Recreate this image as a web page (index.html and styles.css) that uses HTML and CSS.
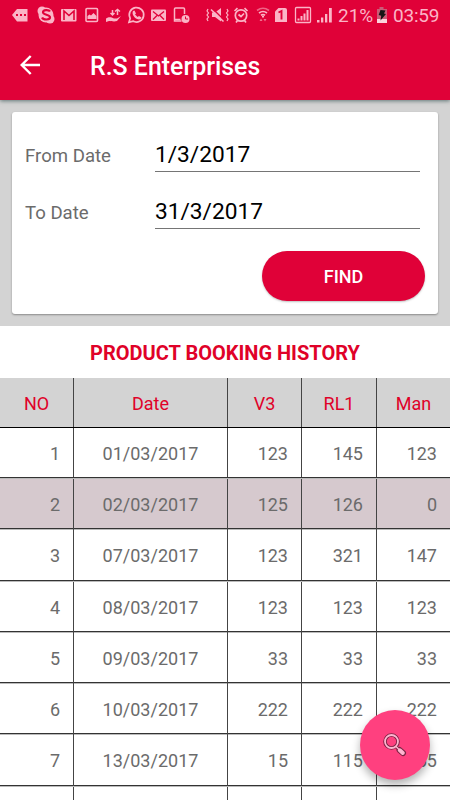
FILE: index.html
```html
<!doctype html>
<html lang="en">
    <head>
        <meta charset="UTF-8" />
        <title>R.S Enterprises</title>
        <link rel="stylesheet" href="styles.css" />
    </head>

    <body>
        <header class="header">
            <div class="status-bar">
                <svg class="status-left" width="195" height="30" viewBox="0 0 195 30">
                    <!-- more notifications -->
                    <path fill="#fbb4c6" d="M12 15l5-6h10.500v12.500H17z" />
                    <path fill="#e00138" d="M16 14h2v2h-2zM20 14h2v2h-2zM24 14h2v2h-2z" />
                    <!-- skype -->
                    <circle cx="46" cy="15" r="7.500" fill="#fbb4c6" />
                    <circle cx="42" cy="11" r="4.500" fill="#fbb4c6" />
                    <circle cx="50" cy="19" r="4.500" fill="#fbb4c6" />
                    <path fill="none" stroke="#e00138" stroke-width="2.200" d="M50 11.500c-1-1.800-7-2-7 .8 0 3 7 1.800 7 5 0 2.800-6.500 3-8 .2" />
                    <!-- gmail -->
                    <rect x="61" y="9" width="15.500" height="12.500" rx="1" fill="#fbb4c6" />
                    <path fill="none" stroke="#e00138" stroke-width="1.600" d="M64 20v-9l5 4.500 5-4.500v9" />
                    <!-- image -->
                    <rect x="86" y="8.500" width="11.500" height="13" rx="1" fill="none" stroke="#fbb4c6" stroke-width="1.600" />
                    <path fill="#fbb4c6" d="M87.500 19v-3l2-1.500 1.500 1 2.500-2.500 3 3v3z" />
                    <!-- data hand -->
                    <path fill="#fbb4c6" d="M106 18.500c3-2 5-1.500 8 0h3l4-2.500-4 5c-3 1-6 0-8 0l-3 1z" />
                    <path fill="none" stroke="#fbb4c6" stroke-width="1.500" d="M112.500 10v5m-2-2l2 2 2-2M117.500 15V9.500m-2.500 2l2.500-2 2.500 2" />
                    <!-- whatsapp -->
                    <path fill="none" stroke="#fbb4c6" stroke-width="1.700" d="M129 22.300l1.200-4a7.200 7.200 0 1 1 2.800 2.800z" />
                    <path fill="#fbb4c6" d="M133 11l1.500-.4 1.500 2.800-1 1.200 2.600 2.500 1.400-1 2.500 1.400c-.5 2.500-3 2.300-5 1.200-2.300-1.200-5-4.700-3.500-7.700z" />
                    <!-- mail -->
                    <rect x="151" y="9.500" width="15" height="11.500" rx="1" fill="#fbb4c6" />
                    <path fill="none" stroke="#e00138" stroke-width="1.300" d="M153 11.500l5.500 4.500 5.500-4.500M153 19.500l4-4M164 19.500l-4-4" />
                    <!-- phone with clock -->
                    <path fill="none" stroke="#fbb4c6" stroke-width="1.500" d="M184.500 14V9a1 1 0 0 0-1-1h-8a1 1 0 0 0-1 1v12h7" />
                    <path stroke="#fbb4c6" stroke-width="1.500" d="M174.500 19.500h6" />
                    <circle cx="185.500" cy="19" r="4" fill="#fbb4c6" />
                    <path fill="none" stroke="#e00138" d="M185.500 16.500V19h2.500" />
                </svg>
                <svg class="status-right" width="128" height="30" viewBox="205 0 128 30">
                    <!-- vibrate, sound off -->
                    <path fill="none" stroke="#fbb4c6" stroke-width="1.200" d="M208 9l-1 2 1.500 2-1.500 2 1.500 2-1.500 2 1 2M227 9l1 2-1.500 2 1.500 2-1.500 2 1.500 2-1 2" />
                    <path fill="#fbb4c6" d="M212 12.500h3l6-4.500v13.500l-6-4.500h-3z" />
                    <path stroke="#e00138" stroke-width="1.500" d="M212 8l13 13" />
                    <path stroke="#fbb4c6" stroke-width="1.600" d="M211 9.500L223.500 21.500" />
                    <!-- alarm -->
                    <circle cx="241" cy="15.500" r="5.700" fill="none" stroke="#fbb4c6" stroke-width="1.700" />
                    <path fill="none" stroke="#fbb4c6" stroke-width="1.700" d="M238.500 14.500l2.500 2 3-3M234.500 11l3-2.800M247.500 11l-3-2.800M237.500 20.500l-1.500 2M244.500 20.500l1.500 2" />
                    <!-- wifi -->
                    <path fill="none" stroke="#fbb4c6" stroke-width="1.600" opacity=".55" d="M257 10.500q6-4.500 12 0" />
                    <path fill="none" stroke="#fbb4c6" stroke-width="1.700" d="M259 13q4-3 8 0M261 15.300q2-1.500 4 0" />
                    <path fill="#fbb4c6" d="M262 16h2v1.500h-2z" />
                    <path fill="#f0708f" d="M259.500 21l1.500-2.500 1.500 2.500zM263.500 19l1.500 2.500 1.500-2.500z" />
                    <!-- sim 1 -->
                    <path fill="#fbb4c6" d="M278.500 8h6.500a2 2 0 0 1 2 2v12h-12V11.500z" />
                    <path fill="none" stroke="#e00138" stroke-width="1.900" d="M278.500 12.500l3-1.500v8.500" />
                    <!-- signal -->
                    <rect x="295.500" y="7.500" width="15" height="15" rx="1" fill="none" stroke="#fbb4c6" stroke-width="1.300" />
                    <path fill="#fbb4c6" d="M297.500 18.500h2v2h-2zM300.500 16h2v4.500h-2zM303.500 13.500h2v7h-2zM306.500 10h2v10.500h-2z" />
                    <path fill="#fbb4c6" d="M317 20h2.500v2.500H317zM321 17.500h2.300v5H321zM325 14h2.300v8.500H325zM329 8h2.800v14.500H329z" />
                </svg>
                <span class="battery-level">21%</span>
                <svg class="battery" width="12" height="30" viewBox="0 0 12 30">
                    <path fill="#c95c77" d="M3.500 7h4v2H11v10H1V9h2.500z" />
                    <path fill="#fbd3dd" d="M1 19h10v4H1z" />
                    <path fill="#151515" d="M4.500 10l5 .5-1.500 3 2 .5-5.500 6.500.7-4.800-2.500-.7z" />
                </svg>
                <span class="clock">03:59</span>
            </div>
            <div class="app-bar">
                <svg class="back" width="20" height="20" viewBox="0 0 20 20">
                    <path fill="none" stroke="#fff" stroke-width="2.400" d="M20 10H2M10.700 1L1.700 10l9 9" />
                </svg>
                <h1 class="title">R.S Enterprises</h1>
            </div>
        </header>

        <section class="filter">
            <form class="card">
                <div class="field">
                    <label class="label" for="from_date">From Date</label>
                    <input class="date-input" type="text" id="from_date" value="1/3/2017" />
                </div>
                <div class="field">
                    <label class="label" for="to_date">To Date</label>
                    <input class="date-input" type="text" id="to_date" value="31/3/2017" />
                </div>
                <button class="find-button" type="button">FIND</button>
            </form>
        </section>

        <h2 class="history-title">PRODUCT BOOKING HISTORY</h2>

        <div class="history">
            <div class="row row-head">
                <span>NO</span><span>Date</span><span>V3</span><span>RL1</span><span>Man</span>
            </div>
            <div class="row">
                <span>1</span><span>01/03/2017</span><span>123</span><span>145</span><span>123</span>
            </div>
            <div class="row row-selected">
                <span>2</span><span>02/03/2017</span><span>125</span><span>126</span><span>0</span>
            </div>
            <div class="row">
                <span>3</span><span>07/03/2017</span><span>123</span><span>321</span><span>147</span>
            </div>
            <div class="row">
                <span>4</span><span>08/03/2017</span><span>123</span><span>123</span><span>123</span>
            </div>
            <div class="row">
                <span>5</span><span>09/03/2017</span><span>33</span><span>33</span><span>33</span>
            </div>
            <div class="row">
                <span>6</span><span>10/03/2017</span><span>222</span><span>222</span><span>222</span>
            </div>
            <div class="row">
                <span>7</span><span>13/03/2017</span><span>15</span><span>115</span><span>155</span>
            </div>
            <div class="row">
                <span></span><span></span><span></span><span></span><span></span>
            </div>
        </div>

        <button class="fab" type="button" aria-label="Search">
            <svg width="24" height="24" viewBox="0 0 24 24">
                <path stroke="#7b2444" stroke-width="6" stroke-linecap="round" d="M16.500 17l3.500 3" />
                <path stroke="#7b2444" stroke-width="3" d="M12.500 13l4 4" />
                <circle cx="8.500" cy="8.500" r="6.500" fill="none" stroke="#7b2444" stroke-width="3.600" />
                <circle cx="8.500" cy="8.500" r="6.500" fill="none" stroke="#ffb5d0" stroke-width="1.800" />
                <path stroke="#ffb5d0" stroke-width="1.400" d="M13 13.500l4 4" />
                <path stroke="#ffb5d0" stroke-width="4" stroke-linecap="round" d="M16.800 17.300l3 2.600" />
            </svg>
        </button>
    </body>
</html>
```
FILE: styles.css
```css
* {
    box-sizing: border-box;
    margin: 0;
    padding: 0;
}

body {
    width: 450px;
    height: 800px;
    overflow: hidden;
    background: #fff;
    color: #6b6b6b;
    font-family: Roboto, sans-serif;
    font-size: 18px;
}

.header {
    position: relative;
    height: 100px;
    background: #e00138;
    box-shadow: 0 1px 4px rgba(0, 40, 40, 0.55);
}

.status-bar {
    display: flex;
    align-items: center;
    height: 30px;
    color: #fbb4c6;
    font-size: 19px;
    line-height: 30px;
}

.status-right {
    margin-left: 10px;
}

.battery-level {
    width: 38px;
    margin-left: 5px;
    padding-top: 1px;
}

.clock {
    margin-left: 5px;
    padding-top: 1px;
    letter-spacing: -0.2px;
}

.app-bar {
    display: flex;
    align-items: center;
    height: 70px;
    padding-left: 20px;
}

.back {
    margin-bottom: 1px;
}

.title {
    margin-left: 50px;
    padding-top: 4px;
    color: #fff;
    font-size: 24.900px;
    font-weight: 500;
    line-height: 30px;
}

.filter {
    height: 226px;
    padding: 12px;
    background: #d3d3d3;
}

.card {
    display: flex;
    flex-direction: column;
    height: 202px;
    padding: 21px 13px 0;
    background: #fff;
    border-radius: 3px;
    box-shadow: 0 1px 2px rgba(0, 0, 0, 0.35);
}

.field {
    display: flex;
    height: 39px;
    margin-bottom: 18px;
}

.label {
    width: 130px;
    padding-top: 11px;
    font-size: 18.600px;
    line-height: 24px;
}

.date-input {
    width: 265px;
    height: 39px;
    padding-top: 4px;
    border: none;
    border-bottom: 1px solid #757575;
    outline: none;
    color: #000;
    font-family: inherit;
    font-size: 22.700px;
}

.find-button {
    align-self: flex-end;
    width: 163px;
    height: 50px;
    margin-top: 4px;
    margin-right: 0;
    padding-top: 1px;
    border: none;
    border-radius: 25px;
    background: #e00138;
    box-shadow: 0 1px 2px rgba(0, 0, 0, 0.25);
    color: #fff;
    font-family: inherit;
    font-size: 18px;
    font-weight: 500;
}

.history-title {
    height: 52px;
    color: #e00128;
    font-size: 20px;
    font-weight: 700;
    line-height: 54px;
    text-align: center;
}

.row {
    display: grid;
    grid-template-columns: 74px 154px 74px 75px 73px;
    height: 51.250px;
    border-top: 1px solid #bbb;
    border-bottom: 1px solid #333;
}

.row span {
    padding-right: 13px;
    border-right: 1px solid #444;
    line-height: 51px;
    text-align: right;
}

.row span:nth-child(2) {
    padding: 0;
    text-align: center;
}

.row span:last-child {
    border-right: none;
}

.row-head {
    height: 50px;
    border-top: none;
    border-bottom-color: #000;
    background: #d3d3d3;
    color: #e00128;
}

.row-head span {
    height: 49px;
    padding: 0;
    line-height: 52px;
    text-align: center;
}

.row-head + .row {
    height: 50px;
    border-top: none;
}

.row-head + .row span {
    height: 49px;
    line-height: 52px;
}

.row-selected {
    background: #d6c9ce;
}

.fab {
    position: absolute;
    top: 710px;
    left: 360px;
    display: flex;
    align-items: center;
    justify-content: center;
    width: 70px;
    height: 70px;
    border: none;
    border-radius: 50%;
    background: #ff407f;
    box-shadow: 0 5px 9px rgba(0, 0, 0, 0.3);
}
```
